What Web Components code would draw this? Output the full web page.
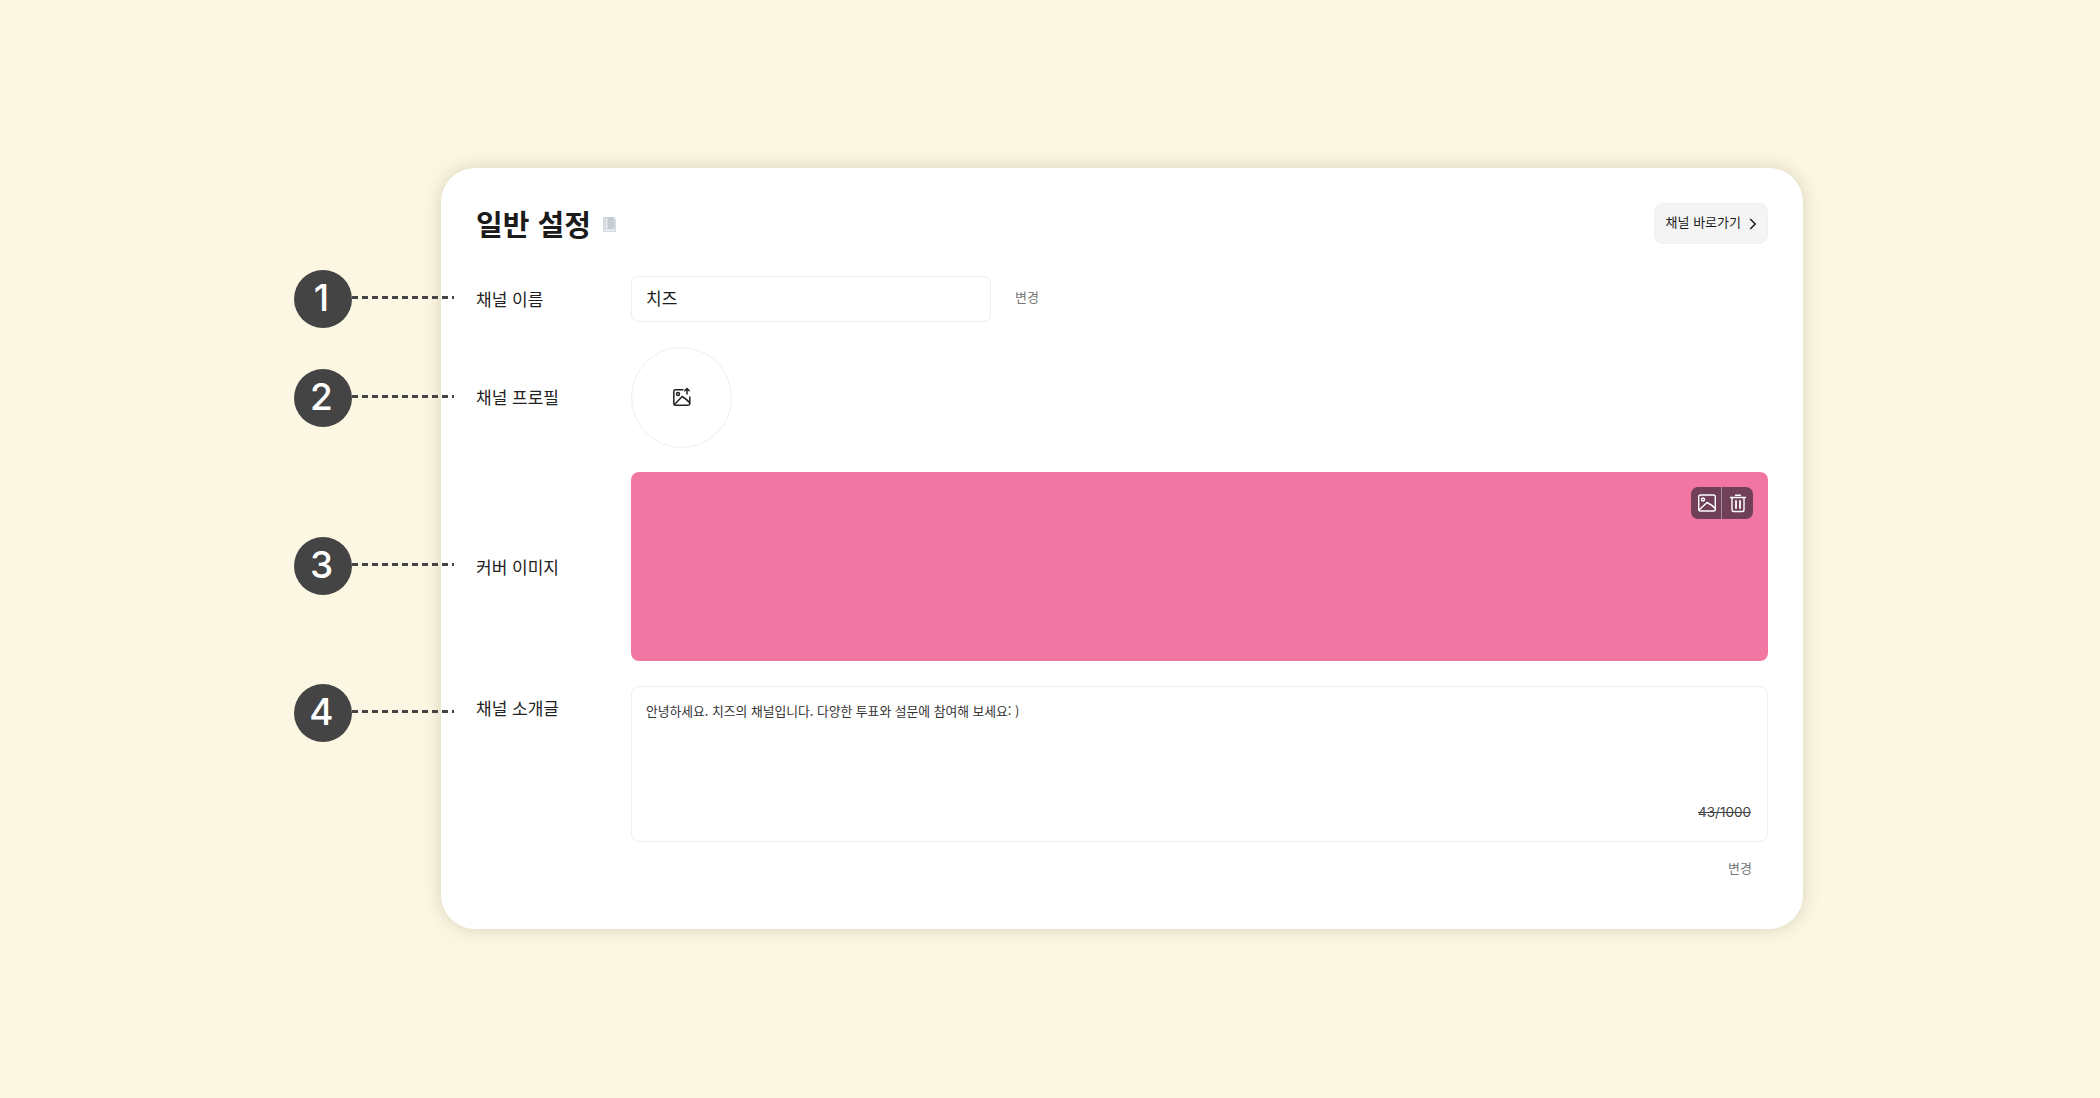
<!DOCTYPE html>
<html lang="ko">
<head>
<meta charset="utf-8">
<title>일반 설정</title>
<style>
	html,body{margin:0;padding:0;}
	body{
		background:#fcf7e3;
		color:#1b1b1b;
		font-family:"Noto Sans CJK KR","Noto Sans",sans-serif;
		width:2100px;
		height:1098px;
		overflow:hidden;
		position:relative;
	}
	settings-card{margin:168px 0 0 441px;}
</style>
</head>
<body>
<settings-card heading="일반 설정">
	<link-button slot="action">채널 바로가기</link-button>
	<settings-row label="채널 이름">
		<name-field value="치즈"></name-field>
	</settings-row>
	<settings-row label="채널 프로필">
		<profile-picker></profile-picker>
	</settings-row>
	<settings-row label="커버 이미지">
		<cover-image></cover-image>
	</settings-row>
	<settings-row label="채널 소개글" top>
		<intro-field count="43/1000">안녕하세요. 치즈의 채널입니다. 다양한 투표와 설문에 참여해 보세요: )</intro-field>
	</settings-row>
</settings-card>
<step-marker num="1" style="top:270px"></step-marker>
<step-marker num="2" style="top:369px"></step-marker>
<step-marker num="3" style="top:537px"></step-marker>
<step-marker num="4" style="top:684px"></step-marker>

<script>
'use strict';

const icons = {
	book:`<svg width="15" height="17" viewBox="0 0 15 17"><path d="M1 1h1.500v13.500h10V3H14v13H1z" fill="#d6dbe1"/><path d="M2.500 1h10v12.500h-10z" fill="#c6ccd3"/><path d="M4.600 2v10.500" stroke="#eef0f2" stroke-width="1.600"/></svg>`,
	chevron:`<svg width="10" height="14" viewBox="0 0 10 14"><path d="M2.200 2l5 5-5 5" fill="none" stroke="#222" stroke-width="1.600"/></svg>`,
	imageAdd:`<svg width="20" height="20" viewBox="0 0 20 20" fill="none" stroke="#222" stroke-width="1.500" stroke-linecap="round" stroke-linejoin="round"><path d="M11 2.800H3.400A1.600 1.600 0 0 0 1.800 4.400v12.200a1.600 1.600 0 0 0 1.600 1.600h12.600a1.800 1.800 0 0 0 1.800-1.800V10"/><circle cx="6" cy="7" r="1.500"/><path d="M2.200 17.800l8-8.300c2.600 1.600 5.500 3.800 7.400 6.300"/><path d="M15 7V1.500M12.800 3.700L15 1.500l2.200 2.200"/></svg>`,
	image:`<svg width="22" height="22" viewBox="0 0 22 22" fill="none" stroke="#fff" stroke-width="1.400" stroke-linejoin="round"><rect x="2.700" y="3" width="16.600" height="16" rx="1.800"/><circle cx="7" cy="7.500" r="1.500"/><path d="M3 18l8-7.500c3 1.500 6 3.500 8.300 6"/></svg>`,
	trash:`<svg width="22" height="22" viewBox="0 0 22 22" fill="none" stroke="#fff" stroke-width="1.400" stroke-linecap="round"><path d="M3.500 5.500h15M8.500 3.200h5"/><path d="M5 5.500V18a1.500 1.500 0 0 0 1.500 1.500h9A1.500 1.500 0 0 0 17 18V5.500"/><path d="M9 9v7M13 9v7" stroke-width="1.800"/></svg>`
};

class BaseElement extends HTMLElement {
	constructor(){
		super();
		this.attachShadow({mode:'open'});
	}
	connectedCallback(){
		this.shadowRoot.innerHTML = `<style>${this.Css}</style>${this.Template}`;
	}
}

class SettingsCard extends BaseElement {
	get Css(){
		return `
:host{
	display:block;
	box-sizing:border-box;
	width:1362px;
	height:761px;
	padding:35px 35px 0 35px;
	background:#fff;
	border-radius:34px;
	box-shadow:0 0 18px rgba(90,85,40,0.22);
}
header{display:flex;align-items:center;justify-content:space-between;height:41px;margin-bottom:32px;}
h1{display:flex;align-items:center;gap:11px;margin:0;font-size:29px;font-weight:600;line-height:37px;color:#1b1b1b;}
h1 svg{margin-top:2px;}
main{display:flex;flex-direction:column;gap:24.500px;}
		`;
	}
	get Template(){
		return `
<header>
	<h1>${this.getAttribute('heading')}${icons.book}</h1>
	<slot name="action"></slot>
</header>
<main><slot></slot></main>`;
	}
}

class LinkButton extends BaseElement {
	get Css(){
		return `
:host{
	display:inline-flex;
	box-sizing:border-box;
	align-items:center;
	gap:7px;
	height:41px;
	padding:0 9px 0 11px;
	background:#f4f4f4;
	border:1px solid #f0f0f0;
	border-radius:9px;
	font-size:13px;
	color:#1b1b1b;
}
span{margin-top:-4px;}
		`;
	}
	get Template(){
		return `<span><slot></slot></span>${icons.chevron}`;
	}
}

class SettingsRow extends BaseElement {
	get Css(){
		return `
:host{display:grid;grid-template-columns:155px 1fr;}
label{font-size:17px;color:#222;align-self:center;margin-top:-1px;}
:host([top]) label{align-self:start;margin-top:9px;}
		`;
	}
	get Template(){
		return `<label>${this.getAttribute('label')}</label><div><slot></slot></div>`;
	}
}

class NameField extends BaseElement {
	get Css(){
		return `
:host{display:flex;align-items:center;gap:24px;}
.box{
	box-sizing:border-box;
	width:360px;
	height:46px;
	display:flex;
	align-items:center;
	padding:0 14px 3px;
	border:1px solid #eeeeee;
	border-radius:7px;
	font-size:17px;
	color:#1b1b1b;
}
.save{font-size:13px;color:#777;margin-top:-5px;}
		`;
	}
	get Template(){
		return `<div class="box">${this.getAttribute('value')}</div><span class="save">변경</span>`;
	}
}

class ProfilePicker extends BaseElement {
	get Css(){
		return `
:host{
	display:flex;
	box-sizing:border-box;
	width:101px;
	height:101px;
	align-items:center;
	justify-content:center;
	border:1px solid #eeeeee;
	border-radius:50%;
}
		`;
	}
	get Template(){
		return icons.imageAdd;
	}
}

class CoverImage extends BaseElement {
	get Css(){
		return `
:host{
	display:flex;
	box-sizing:border-box;
	height:189px;
	justify-content:flex-end;
	align-items:flex-start;
	padding:15px;
	background:#f176a1;
	border-radius:8px;
}
.tools{
	display:flex;
	align-items:center;
	height:32px;
	background:#6f4058;
	border-radius:7px;
}
.tools span{display:flex;align-items:center;justify-content:center;width:31px;height:32px;}
.tools span + span{box-shadow:-1px 0 0 0 rgba(255,255,255,0.4);}
		`;
	}
	get Template(){
		return `<div class="tools"><span>${icons.image}</span><span>${icons.trash}</span></div>`;
	}
}

class IntroField extends BaseElement {
	get Css(){
		return `
:host{display:block;}
.box{
	box-sizing:border-box;
	height:156.500px;
	display:flex;
	flex-direction:column;
	justify-content:space-between;
	padding:14px 16px 21px 14px;
	border:1px solid #eeeeee;
	border-radius:8px;
	font-size:12.800px;
	color:#333;
}
.count{align-self:flex-end;font:13.500px Inter,"Noto Sans",sans-serif;color:#444;text-decoration:line-through;}
.save{display:block;text-align:right;margin:16px 16px 0 0;font-size:13px;color:#777;}
		`;
	}
	get Template(){
		return `
<div class="box"><span><slot></slot></span><span class="count">${this.getAttribute('count')}</span></div>
<span class="save">변경</span>`;
	}
}

// callouts sit over the card, so these are placed from the page edge
class StepMarker extends BaseElement {
	get Css(){
		return `
:host{position:absolute;left:294px;display:flex;align-items:center;}
.num{
	width:58px;
	height:58px;
	display:flex;
	align-items:center;
	justify-content:center;
	border-radius:50%;
	background:#444;
	color:#fff;
	font:500 37px Inter,"Noto Sans",sans-serif;
}
.num span{margin:-3px 0 0 -3px;}
.line{
	width:102px;
	height:3px;
	margin-top:-3px;
	background:repeating-linear-gradient(90deg,#444 0 6px,transparent 6px 10px);
}
		`;
	}
	get Template(){
		return `<div class="num"><span>${this.getAttribute('num')}</span></div><div class="line"></div>`;
	}
}

customElements.define('settings-card',SettingsCard);
customElements.define('link-button',LinkButton);
customElements.define('settings-row',SettingsRow);
customElements.define('name-field',NameField);
customElements.define('profile-picker',ProfilePicker);
customElements.define('cover-image',CoverImage);
customElements.define('intro-field',IntroField);
customElements.define('step-marker',StepMarker);
</script>
</body>
</html>
